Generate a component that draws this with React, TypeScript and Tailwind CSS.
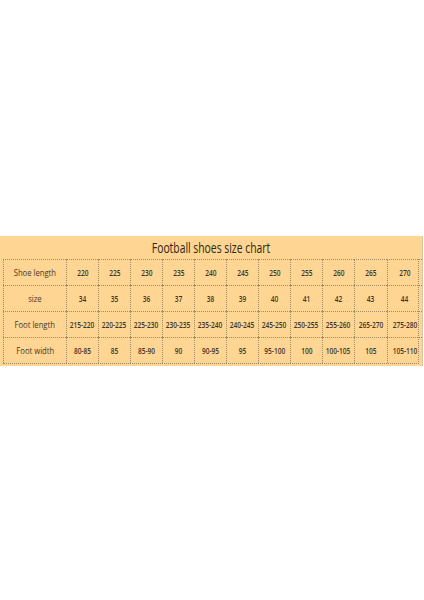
const rows: { label: string; values: string[] }[] = [
  {
    label: "Shoe length",
    values: ["220", "225", "230", "235", "240", "245", "250", "255", "260", "265", "270"],
  },
  {
    label: "size",
    values: ["34", "35", "36", "37", "38", "39", "40", "41", "42", "43", "44"],
  },
  {
    label: "Foot length",
    values: [
      "215-220",
      "220-225",
      "225-230",
      "230-235",
      "235-240",
      "240-245",
      "245-250",
      "250-255",
      "255-260",
      "265-270",
      "275-280",
    ],
  },
  {
    label: "Foot width",
    values: ["80-85", "85", "85-90", "90", "90-95", "95", "95-100", "100", "100-105", "105", "105-110"],
  },
];

export default function App() {
  return (
    <div className="h-[600px] w-[424px] bg-white" style={{ fontFamily: '"Open Sans", "Noto Sans", sans-serif' }}>
      <div className="h-[236px]" />
      <div className="w-[423px] border-r border-[#d8c4a0] bg-[#fed592] pb-[2px]">
        <div className="flex h-[23px] items-center justify-center">
          <span className="inline-block scale-x-[0.74] text-[14px] leading-none text-[#2e2618]">
            Football shoes size chart
          </span>
        </div>
        <div className="mx-[3px] grid grid-cols-[63px_repeat(9,32px)_33px_35px] border-b border-r border-dotted border-[#a08b66]">
          {rows.map((row) => (
            <div key={row.label} className="contents">
              <div className="flex h-[26px] items-center justify-center border-l border-t border-dotted border-[#a08b66]">
                <span className="inline-block scale-x-[0.85] whitespace-nowrap text-[9px] text-[#45382a]">
                  {row.label}
                </span>
              </div>
              {row.values.map((v, i) => (
                <div
                  key={i}
                  className="flex h-[26px] items-center justify-center border-l border-t border-dotted border-[#a08b66]"
                >
                  <span className="inline-block scale-x-[0.82] whitespace-nowrap text-[8px] font-semibold text-[#40342a]">
                    {v}
                  </span>
                </div>
              ))}
            </div>
          ))}
        </div>
      </div>
    </div>
  );
}
